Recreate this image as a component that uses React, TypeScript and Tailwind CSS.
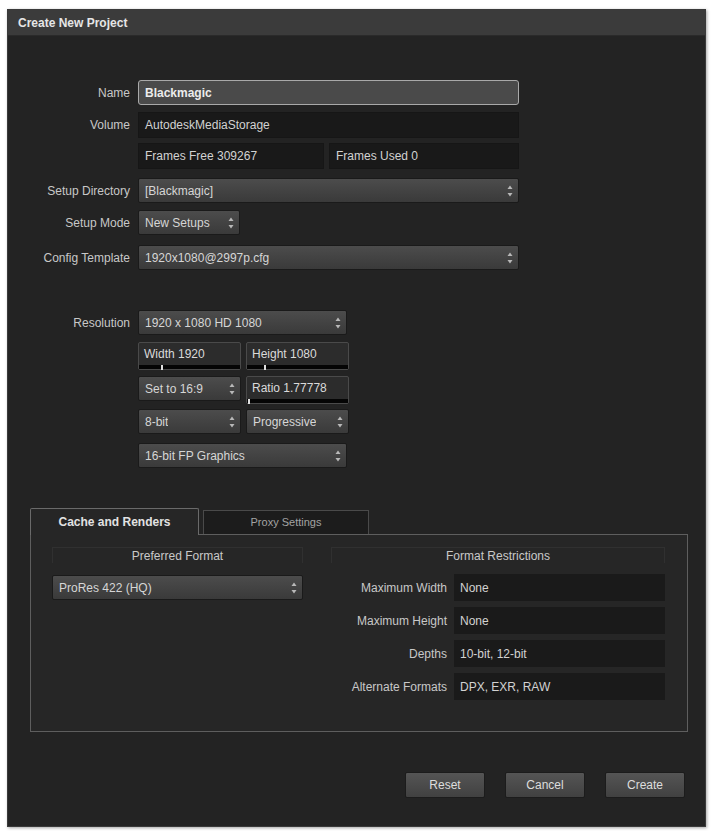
import React from 'react';

const font = { fontFamily: '"Liberation Sans", Arial, sans-serif' };

function Spin() {
  return (
    <svg width="6" height="14" viewBox="0 0 6 14" className="shrink-0">
      <path d="M0.5 5 L3 1.5 L5.5 5 Z" fill="#b8b8b8" />
      <path d="M0.5 9 L3 12.5 L5.5 9 Z" fill="#b8b8b8" />
    </svg>
  );
}

function Select({ value, w, className = '' }: { value: string; w: string; className?: string }) {
  return (
    <div
      className={`${w} h-[25px] flex items-center justify-between pl-[6px] pr-[5px] rounded-[2px] border border-[#1a1a1a] bg-gradient-to-b from-[#4c4c4c] to-[#3a3a3a] text-[#d6d6d6] ${className}`}
    >
      <span className="truncate">{value}</span>
      <Spin />
    </div>
  );
}

function Field({ value, w }: { value: string; w: string }) {
  return (
    <div className={`${w} h-[26px] flex items-center pl-[6px] bg-[#191919] border border-[#161616] text-[#d2d2d2]`}>
      {value}
    </div>
  );
}

function SliderField({ value, tick }: { value: string; tick: string }) {
  return (
    <div className="w-[103px] h-[28px] flex flex-col border border-[#4a4a4a] bg-[#2c2c2c] rounded-[2px]">
      <div className="flex-1 flex items-center pl-[5px] text-[#dadada]">{value}</div>
      <div className="relative h-[4px] bg-[#050505]">
        <div className={`absolute ${tick} top-0 w-[2px] h-[5px] bg-[#e0e0e0]`} />
      </div>
    </div>
  );
}

function Row({ label, children, className = '' }: { label: string; children: React.ReactNode; className?: string }) {
  return (
    <div className={`flex items-center ${className}`}>
      <div className="w-[122px] text-right text-[#c8c8c8]">{label}</div>
      <div className="ml-[8px] flex gap-[5px]">{children}</div>
    </div>
  );
}

function Button({ label }: { label: string }) {
  return (
    <button className="w-[80px] h-[26px] rounded-[2px] border border-[#1c1c1c] bg-gradient-to-b from-[#555555] to-[#414141] text-[#dddddd]">
      {label}
    </button>
  );
}

function Restriction({ label, value }: { label: string; value: string }) {
  return (
    <div className="flex items-center">
      <div className="w-[116px] text-right text-[#c8c8c8]">{label}</div>
      <div className="ml-[7px] w-[211px] h-[27px] flex items-center pl-[6px] bg-[#1a1a1a] text-[#d2d2d2]">{value}</div>
    </div>
  );
}

export default function App() {
  return (
    <div className="w-[712px] h-[831px] bg-white pt-[9px] pl-[7px]" style={font}>
      <div className="w-[699px] h-[818px] flex flex-col bg-[#232323] border border-[#3a3a3a] shadow-[1px_1px_3px_rgba(0,0,0,0.35)] text-[12px]">
        {/* Title Bar */}
        <div className="h-[26px] shrink-0 flex items-center pl-[10px] bg-[#3b3b3b] border-b border-[#2a2a2a] text-[#e6e6e6] font-bold">
          Create New Project
        </div>

        {/* Project fields */}
        <div className="flex flex-col pt-[44px]">
          <Row label="Name">
            <div className="w-[381px] h-[25px] flex items-center pl-[6px] rounded-[3px] border border-[#a9a9a9] bg-[#4a4a4a] text-[#ececec] font-bold">
              Blackmagic
            </div>
          </Row>
          <Row label="Volume" className="mt-[7px]">
            <Field value="AutodeskMediaStorage" w="w-[381px]" />
          </Row>
          <Row label="" className="mt-[5px]">
            <Field value="Frames Free 309267" w="w-[186px]" />
            <Field value="Frames Used 0" w="w-[190px]" />
          </Row>
          <Row label="Setup Directory" className="mt-[9px]">
            <Select value="[Blackmagic]" w="w-[381px]" />
          </Row>
          <Row label="Setup Mode" className="mt-[7px]">
            <Select value="New Setups" w="w-[102px]" />
          </Row>
          <Row label="Config Template" className="mt-[10px]">
            <Select value="1920x1080@2997p.cfg" w="w-[381px]" />
          </Row>
        </div>

        {/* Resolution */}
        <div className="flex flex-col mt-[40px]">
          <Row label="Resolution">
            <Select value="1920 x 1080 HD 1080" w="w-[209px]" />
          </Row>
          <Row label="" className="mt-[7px]">
            <SliderField value="Width 1920" tick="left-[22px]" />
            <SliderField value="Height 1080" tick="left-[17px]" />
          </Row>
          <Row label="" className="mt-[6px]">
            <Select value="Set to 16:9" w="w-[103px]" />
            <SliderField value="Ratio 1.77778" tick="left-[1px]" />
          </Row>
          <Row label="" className="mt-[5px]">
            <Select value="8-bit" w="w-[103px]" />
            <Select value="Progressive" w="w-[103px]" />
          </Row>
          <Row label="" className="mt-[9px]">
            <Select value="16-bit FP Graphics" w="w-[209px]" />
          </Row>
        </div>

        {/* Tabs */}
        <div className="mt-[39px] ml-[22px] w-[658px] flex flex-col">
          <div className="flex items-end h-[27px]">
            <div className="w-[169px] h-[27px] flex items-center justify-center border border-b-0 border-[#6a6a6a] rounded-t-[2px] bg-[#262626] text-[#e2e2e2] font-bold relative z-10 -mb-px">
              Cache and Renders
            </div>
            <div className="ml-[4px] w-[166px] h-[24px] flex items-center justify-center border border-b-0 border-[#4a4a4a] bg-[#1c1c1c] text-[#a3a3a3] text-[11px]">
              Proxy Settings
            </div>
          </div>
          <div className="h-[198px] border border-[#5e5e5e] bg-[#262626] flex pt-[12px]">
            {/* Preferred Format */}
            <div className="ml-[21px] w-[251px] flex flex-col">
              <div className="h-[16px] flex items-center justify-center border-t border-x border-[#303030] text-[#c9c9c9]">
                Preferred Format
              </div>
              <Select value="ProRes 422 (HQ)" w="w-[251px]" className="mt-[12px]" />
            </div>

            {/* Format Restrictions */}
            <div className="ml-[28px] w-[334px] flex flex-col">
              <div className="h-[16px] flex items-center justify-center border-t border-x border-[#303030] text-[#c9c9c9]">
                Format Restrictions
              </div>
              <div className="mt-[11px] flex flex-col gap-[6px]">
                <Restriction label="Maximum Width" value="None" />
                <Restriction label="Maximum Height" value="None" />
                <Restriction label="Depths" value="10-bit, 12-bit" />
                <Restriction label="Alternate Formats" value="DPX, EXR, RAW" />
              </div>
            </div>
          </div>
        </div>

        {/* Buttons */}
        <div className="mt-[40px] flex justify-end gap-[20px] pr-[20px]">
          <Button label="Reset" />
          <Button label="Cancel" />
          <Button label="Create" />
        </div>
      </div>
    </div>
  );
}
